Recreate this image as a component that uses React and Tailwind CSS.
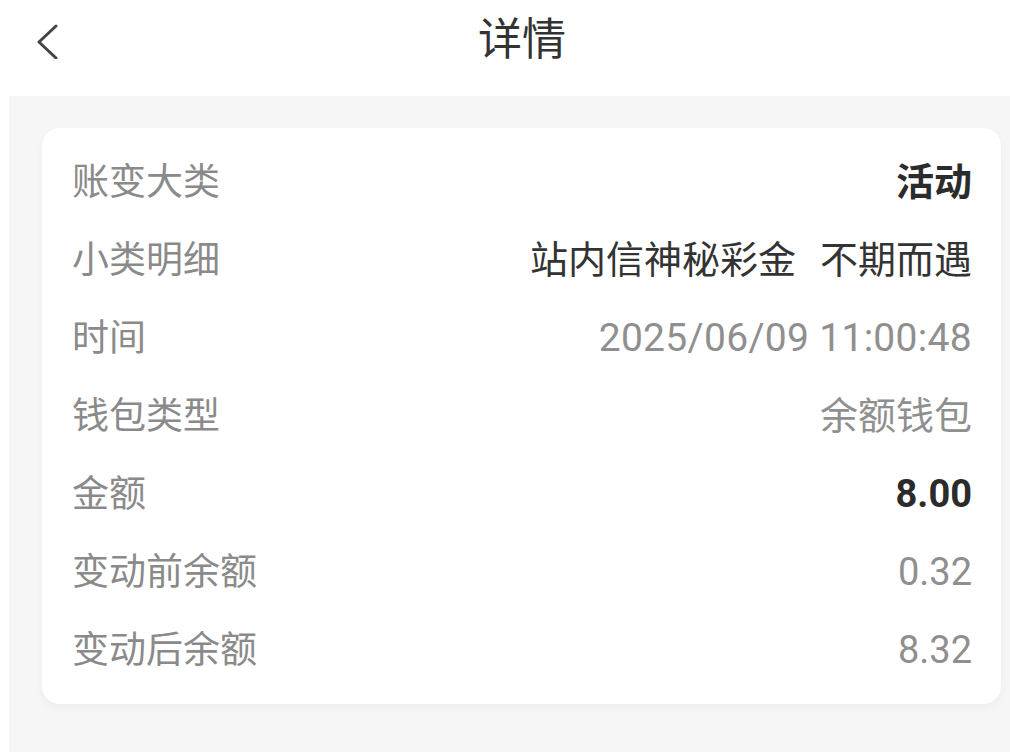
import React from 'react';

const rows = [
  { label: '账变大类', value: '活动', tone: 'bold' },
  { label: '小类明细', value: ['站内信神秘彩金', '不期而遇'], tone: 'dark' },
  { label: '时间', value: '2025/06/09 11:00:48', tone: 'muted', wide: true },
  { label: '钱包类型', value: '余额钱包', tone: 'muted' },
  { label: '金额', value: '8.00', tone: 'bold' },
  { label: '变动前余额', value: '0.32', tone: 'muted' },
  { label: '变动后余额', value: '8.32', tone: 'muted' },
];

const toneClass = {
  bold: 'text-[#2b2b2b] font-bold',
  dark: 'text-[#333333]',
  muted: 'text-[#8f8f8f]',
};

const DetailRow = ({ label, value, tone, wide }) => (
  <div className="h-[78px] flex items-center justify-between pl-[30px] pr-[29px]">
    <span className="text-[37px] leading-none text-[#8a8a8a]">{label}</span>
    <span className={`${wide ? 'text-[39px] tracking-[0.3px]' : 'text-[38px]'} leading-none ${toneClass[tone]}`}>
      {Array.isArray(value) ? (
        <>
          {value[0]}
          <span className="ml-[24px]">{value[1]}</span>
        </>
      ) : (
        value
      )}
    </span>
  </div>
);

export default function App() {
  return (
    <div
      className="w-[1010px] h-[752px] bg-white flex flex-col overflow-hidden"
      style={{ fontFamily: "Roboto, 'Noto Sans CJK SC', sans-serif" }}
    >
      <header className="h-[96px] shrink-0 flex items-start pt-[18px]">
        <svg className="ml-[34px] mt-[5px]" width="28" height="36" viewBox="0 0 28 36" fill="none">
          <path d="M22 3 L5 19 L22 35" stroke="#444" strokeWidth="3" strokeLinecap="round" strokeLinejoin="round" />
        </svg>
        <h1 className="ml-[416px] text-[44px] leading-[44px] text-[#333333] font-normal">详情</h1>
      </header>

      <main className="flex-1 ml-[9px] bg-[#f6f6f6] pt-[32px] pl-[33px] pr-[9px]">
        <div className="bg-white rounded-[18px] py-[15px] shadow-[0_4px_10px_rgba(0,0,0,0.04)]">
          {rows.map((r) => (
            <DetailRow key={r.label} {...r} />
          ))}
        </div>
      </main>
    </div>
  );
}
